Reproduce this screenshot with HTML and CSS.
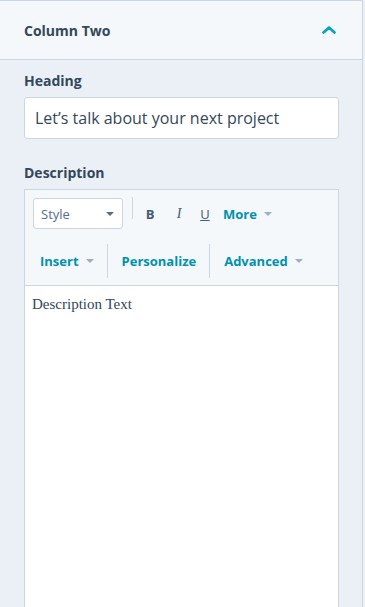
FILE: index.html
```html
<!DOCTYPE html>
<html>
<head>
<meta charset="utf-8">
<link rel="stylesheet" href="styles.css">
</head>
<body>
<div class="panel">
  <div class="header">
    <span class="title">Column Two</span>
    <svg class="chev" width="14" height="8" viewBox="0 0 14 8"><path d="M1.5 6.5 L7 1.5 L12.5 6.5" fill="none" stroke="#00a4bd" stroke-width="2.6" stroke-linecap="round" stroke-linejoin="round"/></svg>
  </div>
  <div class="body">
    <div class="label">Heading</div>
    <div class="input">Let’s talk about your next project</div>
    <div class="label label-desc">Description</div>
    <div class="editor">
      <div class="toolbar">
        <div class="row row1">
          <div class="select"><span>Style</span><span class="caret dark"></span></div>
          <div class="sep sep1"></div>
          <span class="fmt b">B</span>
          <span class="fmt i">I</span>
          <span class="fmt u">U</span>
          <span class="link">More</span><span class="caret"></span>
        </div>
        <div class="row row2">
          <div class="grp g1"><span class="link">Insert</span><span class="caret"></span></div>
          <div class="sep"></div>
          <div class="grp"><span class="link">Personalize</span></div>
          <div class="sep"></div>
          <div class="grp"><span class="link">Advanced</span><span class="caret"></span></div>
        </div>
      </div>
      <div class="content">Description Text</div>
    </div>
  </div>
</div>
</body>
</html>
```
FILE: styles.css
```css
* { box-sizing: border-box; }
html, body { margin: 0; padding: 0; }
body {
  background: #eaf0f6;
  font-family: "Open Sans", "Lato", sans-serif;
  color: #33475b;
  height: 607px;
  overflow: hidden;
}
.panel {
  width: 363px;
  border-right: 1px solid #cbd6e2;
  min-height: 607px;
}
.header {
  height: 60px;
  background: #f5f8fa;
  border-top: 1px solid #cbd6e2;
  border-bottom: 1px solid #cbd6e2;
  display: flex;
  align-items: center;
  justify-content: space-between;
  padding: 0 26px 0 24px;
}
.title {
  font-weight: 700;
  font-size: 14px;
}
.chev { display: block; }
.body {
  padding: 12px 23px 0 24px;
}
.label {
  font-weight: 700;
  font-size: 14px;
  line-height: 18px;
  margin-bottom: 7px;
}
.label-desc { margin-top: 25px; margin-bottom: 7px; }
.input {
  height: 42px;
  background: #fff;
  border: 1px solid #cbd6e2;
  border-radius: 3px;
  font-size: 16px;
  line-height: 40px;
  padding: 0 10px;
}
.editor {
  border: 1px solid #cbd6e2;
  border-bottom: none;
  background: #fff;
  height: 430px;
}
.toolbar {
  background: #f5f8fa;
  border-bottom: 1px solid #cbd6e2;
  padding: 8px 8px 6px 8px;
}
.row {
  display: flex;
  align-items: center;
}
.row1 { height: 31px; }
.row2 { height: 34px; margin-top: 15px; margin-left: -8px; margin-bottom: 1px; }
.select {
  width: 90px;
  height: 31px;
  background: #fff;
  border: 1px solid #cbd6e2;
  border-radius: 3px;
  display: flex;
  align-items: center;
  justify-content: space-between;
  padding: 0 8px 0 7px;
  font-size: 13px;
  color: #516f90;
}
.sep {
  width: 1px;
  align-self: stretch;
  background: #cbd6e2;
}
.sep1 { margin: -2px 0 9px 9px; align-self: auto; height: 22px; }
.fmt {
  font-size: 13px;
  font-weight: 700;
  color: #425b76;
  width: 14px;
  text-align: center;
}
.fmt.b { margin-left: 10px; }
.fmt.i { margin-left: 15px; font-style: italic; font-weight: 400; font-family: "Liberation Serif", serif; font-size: 14px; }
.fmt.u { margin-left: 12px; text-decoration: underline; font-weight: 400; }
.fmt.u + .link { margin-left: 11px; }
.link {
  font-weight: 700;
  font-size: 13px;
  color: #0091ae;
}
.caret {
  display: inline-block;
  width: 0; height: 0;
  border-left: 4px solid transparent;
  border-right: 4px solid transparent;
  border-top: 4px solid #99afc4;
  margin-left: 7px;
}
.caret.dark { border-top-color: #516f90; }
.grp {
  display: flex;
  align-items: center;
  padding: 0 13px 0 14px;
}
.grp.g1 { padding-left: 15px; }
.content {
  font-family: "Liberation Serif", "Times New Roman", serif;
  font-size: 15px;
  padding: 10px 7px;
  color: #33475b;
}
```
